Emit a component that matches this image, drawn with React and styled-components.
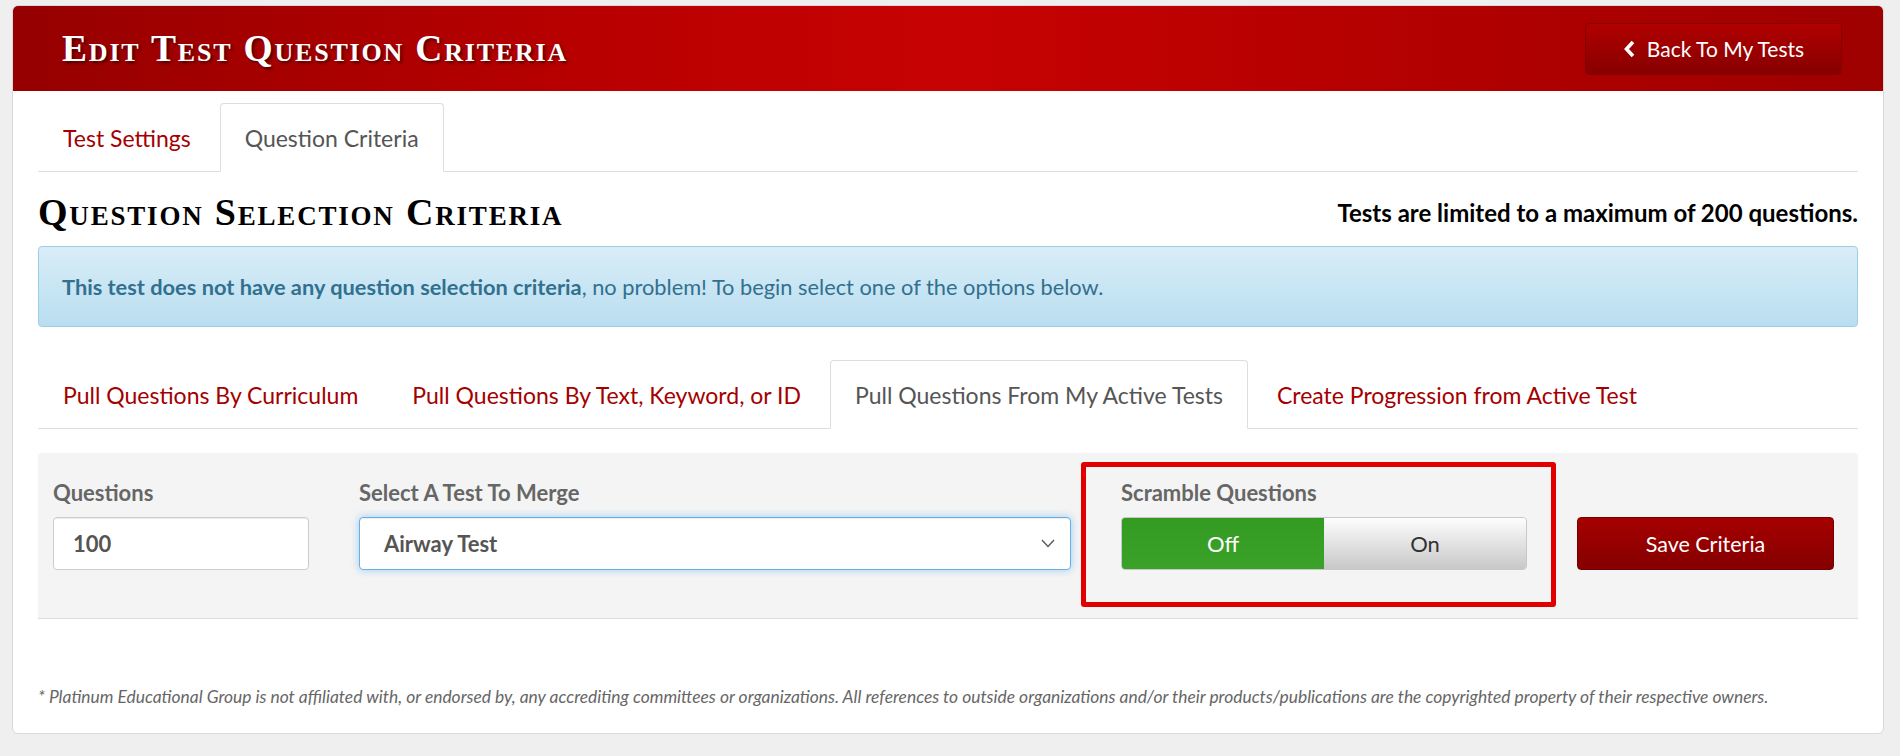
import React from "react";
import styled, { createGlobalStyle } from "styled-components";

const GlobalStyle = createGlobalStyle`
  body {
    margin: 0;
    background: #efefef;
    font-family: Lato, "Liberation Sans", sans-serif;
  }
`;

const Page = styled.div`
  padding: 5px 16px 23px 12px;
`;

const Card = styled.div`
  background: #fff;
  border: 1px solid #d9d9d9;
  border-radius: 6px;
  overflow: hidden;
`;

const Header = styled.div`
  height: 85px;
  display: flex;
  align-items: center;
  justify-content: space-between;
  padding: 0 41px 0 49px;
  background: linear-gradient(90deg, #960000 0%, #b80000 30%, #c70202 50%, #b30000 75%, #9e0000 100%);
`;

const Title = styled.h1`
  margin: 0;
  color: #fff;
  font-family: "Liberation Serif", "DejaVu Serif", serif;
  font-variant: small-caps;
  font-weight: bold;
  font-size: 37.5px;
  letter-spacing: 1.8px;
  text-shadow: 2px 2px 3px rgba(0, 0, 0, 0.55);
`;

const BackBtn = styled.button`
  width: 257px;
  height: 52px;
  display: flex;
  align-items: center;
  justify-content: center;
  gap: 11px;
  border: 1px solid #8a0000;
  border-radius: 4px;
  background: linear-gradient(#b00000, #870000);
  color: #fff;
  font-family: Lato, sans-serif;
  font-size: 21px;
  cursor: pointer;
`;

const Body = styled.div`
  padding: 12px 25px 26px;
`;

const TabBar = styled.div`
  display: flex;
  border-bottom: 1px solid #ddd;
  margin-top: ${(p) => p.top || 0}px;
`;

const Tab = styled.div`
  height: 67px;
  display: flex;
  align-items: center;
  padding: 0 24px;
  margin-right: 4px;
  margin-bottom: -1px;
  font-size: 23px;
  border: 1px solid ${(p) => (p.active ? "#ddd" : "transparent")};
  border-bottom-color: ${(p) => (p.active ? "#fff" : "transparent")};
  border-radius: 4px 4px 0 0;
  background: ${(p) => (p.active ? "#fff" : "transparent")};
  color: ${(p) => (p.active ? "#555" : "#a40000")};
`;

const HeadingRow = styled.div`
  display: flex;
  align-items: center;
  justify-content: space-between;
  height: 40px;
  margin-top: 20px;
`;

const Heading = styled.h2`
  margin: 0;
  font-family: "Liberation Serif", "DejaVu Serif", serif;
  font-variant: small-caps;
  font-weight: bold;
  font-size: 38px;
  letter-spacing: 1.8px;
  color: #000;
`;

const Limit = styled.div`
  font-size: 24px;
  font-weight: bold;
  color: #000;
`;

const Alert = styled.div`
  margin-top: 14px;
  height: 79px;
  display: flex;
  align-items: center;
  padding: 0 23px;
  border: 1px solid #9acfea;
  border-radius: 4px;
  background: linear-gradient(#d9edf7, #b9def0);
  color: #31708f;
  font-size: 21.8px;

  b {
    font-weight: bold;
  }
`;

const Well = styled.div`
  margin-top: 24px;
  background: #f4f4f4;
  border-bottom: 1px solid #ddd;
  border-radius: 4px 4px 0 0;
  padding: 28px 15px 48px;
  display: grid;
  grid-template-columns: 256px 712px 406px 257px;
  column-gap: 50px;
  align-items: end;
`;

const Field = styled.div`
  position: relative;
  display: flex;
  flex-direction: column;
`;

const Label = styled.label`
  height: 24px;
  line-height: 24px;
  margin-bottom: 12px;
  font-size: 22px;
  font-weight: bold;
  color: #666;
`;

const Input = styled.div`
  height: 53px;
  box-sizing: border-box;
  display: flex;
  align-items: center;
  justify-content: space-between;
  padding: 0 15px 0 ${(p) => p.pl || 19}px;
  background: #fff;
  border: 1px solid ${(p) => (p.focus ? "#66afe9" : "#ccc")};
  border-radius: 4px;
  box-shadow: ${(p) =>
    p.focus
      ? "inset 0 1px 1px rgba(0,0,0,.075), 0 0 8px rgba(102,175,233,.6)"
      : "inset 0 1px 1px rgba(0,0,0,.075)"};
  font-size: 22px;
  font-weight: bold;
  color: #555;
`;

const Highlight = styled.div`
  position: absolute;
  left: -40px;
  right: -29px;
  top: -19px;
  bottom: -37px;
  border: 5px solid #e00000;
  border-radius: 3px;
  pointer-events: none;
`;

const Toggle = styled.div`
  height: 53px;
  display: flex;
  border: 1px solid #c8c8c8;
  border-radius: 4px;
  overflow: hidden;
  box-sizing: border-box;
`;

const ToggleHalf = styled.div`
  flex: 1;
  display: flex;
  align-items: center;
  justify-content: center;
  font-size: 22px;
  color: ${(p) => (p.on ? "#fff" : "#333")};
  background: ${(p) => (p.on ? "linear-gradient(#339a22, #3aa229)" : "linear-gradient(#fdfdfd, #c8c8c8)")};
`;

const SaveBtn = styled.button`
  height: 53px;
  border: 1px solid #7a0000;
  border-radius: 4px;
  background: linear-gradient(#a60000, #850000);
  color: #fff;
  font-family: Lato, sans-serif;
  font-size: 21.5px;
  cursor: pointer;
`;

const Footer = styled.p`
  margin: 68px 0 0;
  font-size: 17.4px;
  font-style: italic;
  color: #666;
  line-height: 20px;
`;

const App = () => {
  return (
    <Page>
      <GlobalStyle />
      <Card>
        <Header>
          <Title>Edit Test Question Criteria</Title>
          <BackBtn>
            <svg width="13" height="18" viewBox="0 0 13 18">
              <polyline points="10,2 3.5,9 10,16" fill="none" stroke="#fff" strokeWidth="3.6" strokeLinejoin="miter" />
            </svg>
            Back To My Tests
          </BackBtn>
        </Header>
        <Body>
          <TabBar>
            <Tab>Test Settings</Tab>
            <Tab active>Question Criteria</Tab>
          </TabBar>

          <HeadingRow>
            <Heading>Question Selection Criteria</Heading>
            <Limit>Tests are limited to a maximum of 200 questions.</Limit>
          </HeadingRow>

          <Alert>
            <span>
              <b>This test does not have any question selection criteria</b>, no problem! To begin select one of the options below.
            </span>
          </Alert>

          <TabBar top={33}>
            <Tab>Pull Questions By Curriculum</Tab>
            <Tab>Pull Questions By Text, Keyword, or ID</Tab>
            <Tab active>Pull Questions From My Active Tests</Tab>
            <Tab>Create Progression from Active Test</Tab>
          </TabBar>

          <Well>
            <Field>
              <Label>Questions</Label>
              <Input>100</Input>
            </Field>
            <Field>
              <Label>Select A Test To Merge</Label>
              <Input focus pl={24}>
                Airway Test
                <svg width="14" height="9" viewBox="0 0 14 9">
                  <polyline points="1,1 7,7.5 13,1" fill="none" stroke="#555" strokeWidth="1.3" />
                </svg>
              </Input>
            </Field>
            <Field>
              <Highlight />
              <Label>Scramble Questions</Label>
              <Toggle>
                <ToggleHalf on>Off</ToggleHalf>
                <ToggleHalf>On</ToggleHalf>
              </Toggle>
            </Field>
            <Field>
              <SaveBtn>Save Criteria</SaveBtn>
            </Field>
          </Well>

          <Footer>
            * Platinum Educational Group is not affiliated with, or endorsed by, any accrediting committees or organizations. All references to outside organizations and/or their products/publications are the copyrighted property of their respective owners.
          </Footer>
        </Body>
      </Card>
    </Page>
  );
};

export default App;
